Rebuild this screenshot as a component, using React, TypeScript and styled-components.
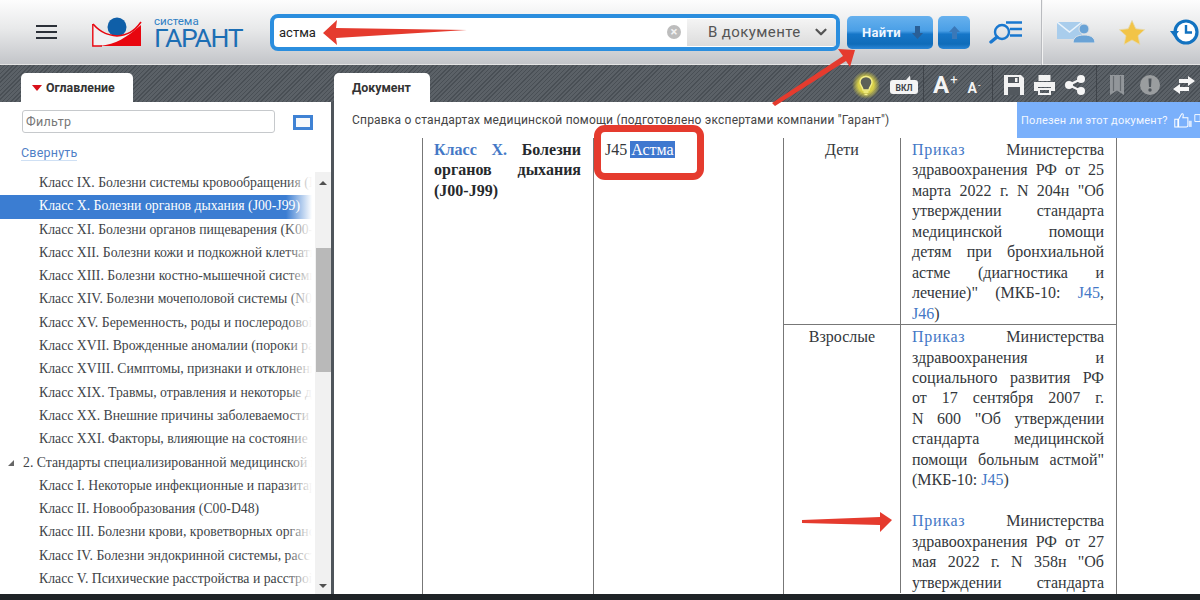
import React from 'react';
import styled, { createGlobalStyle } from 'styled-components';
import { ChevronDown } from 'lucide-react';

const GlobalStyle = createGlobalStyle`
  html, body { margin: 0; padding: 0; background: #1f2327; }
  * { box-sizing: border-box; }
`;

const Page = styled.div`
  position: relative;
  width: 1200px;
  height: 600px;
  overflow: hidden;
  display: flex;
  flex-direction: column;
  font-family: Roboto, "Liberation Sans", sans-serif;
  background: #1f2327;
`;

const Header = styled.header`
  height: 65px;
  flex: none;
  display: flex;
  align-items: center;
  background: linear-gradient(#fdfdfd 0%, #e8e9ea 45%, #c3c5c9 100%);
  border-bottom: 1px solid #e4e4e4;
`;

const Burger = styled.div`
  width: 21px;
  height: 14px;
  margin-left: 36px;
  border-top: 2px solid #2b3038;
  border-bottom: 2px solid #2b3038;
  position: relative;
  &::after {
    content: '';
    position: absolute;
    left: 0;
    right: 0;
    top: 4px;
    height: 2px;
    background: #2b3038;
  }
`;

const Brand = styled.div`
  display: flex;
  align-items: center;
  margin-left: 35px;
  width: 178px;
  height: 40px;
`;

const BrandText = styled.div`
  margin-left: 11px;
  padding-top: 4px;
  color: #1c6eb4;
  display: flex;
  flex-direction: column;
`;

const BrandSmall = styled.span`
  font-size: 11.5px;
  line-height: 6px;
  color: #2f7fc4;
`;

const BrandBig = styled.span`
  font-size: 26.5px;
  line-height: 27px;
  font-weight: 400;
  letter-spacing: -1.3px;
`;

const SearchBox = styled.div`
  width: 570px;
  height: 37px;
  display: flex;
  align-items: stretch;
  border: 4px solid #2b8ede;
  border-radius: 8px;
  background: #fff;
  overflow: hidden;
`;

const SearchText = styled.div`
  flex: 1;
  padding-left: 5px;
  display: flex;
  align-items: center;
  justify-content: space-between;
  font-size: 13px;
  color: #222;
`;

const ClearIcon = styled.span`
  width: 14px;
  height: 14px;
  margin-right: 6px;
  border-radius: 50%;
  background: #bdbdbd;
  color: #f2f2f2;
  font-size: 13px;
  line-height: 13px;
  text-align: center;
  font-weight: 700;
`;

const ScopeSelect = styled.div`
  width: 149px;
  margin: 1px 0;
  display: flex;
  align-items: center;
  justify-content: space-between;
  padding: 0 6px 0 21px;
  background: linear-gradient(#f4f4f4, #dcdcdc);
  color: #555;
  font-size: 15px;
  letter-spacing: 0.4px;
`;

const FindButton = styled.button<{ $wide?: boolean }>`
  width: ${(p) => (p.$wide ? '86px' : '32px')};
  height: 33px;
  margin-left: ${(p) => (p.$wide ? '7px' : '5px')};
  border: 0;
  padding: 0 0 0 ${(p) => (p.$wide ? '15px' : '0')};
  border-radius: 5px;
  display: flex;
  align-items: center;
  justify-content: ${(p) => (p.$wide ? 'flex-start' : 'center')};
  gap: 11px;
  background: linear-gradient(#67b1ee 0%, #4a9fe6 45%, #1676c8 55%, #0f6cb9 85%, #2a86d6 100%);
  color: #eef6ff;
  font-family: inherit;
  font-size: 13px;
  font-weight: 700;
  letter-spacing: 0.3px;
`;

const HeaderIcon = styled.div<{ $left: number }>`
  margin-left: ${(p) => p.$left}px;
  display: flex;
  flex: none;
`;

const HeaderDivider = styled.div`
  width: 2px;
  height: 65px;
  margin-left: 18px;
  background: #b9bbbf;
  border-right: 1px solid #f2f2f2;
`;

const Strip = styled.div`
  height: 37px;
  flex: none;
  display: flex;
  align-items: flex-end;
  background: repeating-linear-gradient(135deg, #494f55 0 1px, #5b6167 1px 3px);
`;

const TabSlot = styled.div<{ $width: number }>`
  width: ${(p) => p.$width}px;
  flex: none;
  padding-left: ${(p) => (p.$width > 500 ? 0 : 21)}px;
`;

const Tab = styled.div<{ $width: number }>`
  width: ${(p) => p.$width}px;
  height: 29px;
  background: #fff;
  border-radius: 5px 5px 0 0;
  display: flex;
  align-items: center;
  gap: 4px;
  padding-left: ${(p) => (p.$width > 100 ? 11 : 18)}px;
  color: #333;
  font-size: 12.4px;
  font-weight: 700;
`;

const Caret = styled.span`
  width: 0;
  height: 0;
  border-left: 5px solid transparent;
  border-right: 5px solid transparent;
  border-top: 6px solid #d8101a;
`;

const Tools = styled.div`
  flex: 1;
  height: 37px;
  display: flex;
  align-items: center;
`;

const ToolDivider = styled.div<{ $left: number }>`
  width: 1px;
  height: 37px;
  margin-left: ${(p) => p.$left}px;
  background: #3f444a;
`;

const ToolIcon = styled.div<{ $left: number }>`
  margin-left: ${(p) => p.$left}px;
  margin-top: 3px;
  display: flex;
  flex: none;
`;

const FontSizeMark = styled.span<{ $big?: boolean; $left: number }>`
  margin-left: ${(p) => p.$left}px;
  font-size: ${(p) => (p.$big ? 24 : 14)}px;
  line-height: 1;
  font-weight: 700;
  color: #f4f4f4;
  display: flex;
  align-items: flex-start;
  margin-top: ${(p) => (p.$big ? 3 : 9)}px;
  & > sup {
    font-size: ${(p) => (p.$big ? 13 : 9)}px;
    font-weight: 400;
    line-height: 1;
    margin-left: 1px;
  }
`;

const Main = styled.main`
  flex: 1;
  min-height: 0;
  overflow: hidden;
  display: flex;
  background: #4f555b;
`;

const Footer = styled.footer`
  height: 6px;
  flex: none;
  background: #1f2327;
`;

const Sidebar = styled.aside`
  width: 331px;
  flex: none;
  background: #fff;
  display: flex;
  flex-direction: column;
`;

const FilterRow = styled.div`
  height: 39px;
  flex: none;
  padding: 8px 0 0 22px;
  display: flex;
  align-items: flex-start;
`;

const FilterInput = styled.div`
  width: 253px;
  height: 23px;
  border: 1px solid #c6c9cc;
  border-radius: 3px;
  padding-left: 3px;
  font-size: 12.5px;
  line-height: 21px;
  letter-spacing: 0.3px;
  color: #777;
`;

const ViewToggle = styled.div`
  width: 20px;
  height: 15px;
  margin: 5px 0 0 18px;
  border: 3px solid #3f82d4;
  background: #f6f8fb;
`;

const CollapseRow = styled.div`
  height: 31px;
  flex: none;
  padding: 1px 0 0 21px;
`;

const CollapseLink = styled.span`
  font-size: 12.5px;
  line-height: 15px;
  letter-spacing: 0.2px;
  color: #4f80c6;
  border-bottom: 1px solid #cfe0f4;
  display: inline-block;
`;

const TreeArea = styled.div`
  flex: 1;
  min-height: 0;
  display: flex;
`;

const TreeList = styled.div`
  position: relative;
  width: 312px;
  flex: none;
  overflow: hidden;
  &::after {
    content: '';
    position: absolute;
    top: 0;
    bottom: 0;
    right: 0;
    width: 26px;
    background: linear-gradient(to right, rgba(255, 255, 255, 0), #fff);
  }
`;

const TreeRow = styled.div<{ $active?: boolean; $level?: number }>`
  height: 23.3px;
  line-height: 22px;
  padding-left: ${(p) => (p.$level === 1 ? 23 : 39)}px;
  white-space: nowrap;
  font-family: "Liberation Serif", serif;
  font-size: 13.75px;
  color: ${(p) => (p.$active ? '#fff' : '#404448')};
  background: ${(p) => (p.$active ? '#3b7dd2' : 'transparent')};
  position: relative;
`;

const Expander = styled.span`
  position: absolute;
  left: 8px;
  top: 8px;
  width: 0;
  height: 0;
  border-left: 6px solid transparent;
  border-bottom: 6px solid #666;
`;

const Scrollbar = styled.div`
  width: 16px;
  margin-left: 3px;
  padding-bottom: 6px;
  flex: none;
  background: #f1f1f1;
  display: flex;
  flex-direction: column;
  align-items: center;
`;

const ScrollArrow = styled.span<{ $down?: boolean }>`
  width: 0;
  height: 0;
  margin-top: ${(p) => (p.$down ? '6px' : '9px')};
  border-left: 4px solid transparent;
  border-right: 4px solid transparent;
  border-bottom: ${(p) => (p.$down ? '0' : '4px solid #505050')};
  border-top: ${(p) => (p.$down ? '4px solid #505050' : '0')};
`;

const ScrollThumb = styled.div`
  width: 15px;
  height: 124px;
  margin-top: 63px;
  background: #b9b9b9;
`;

const ScrollGap = styled.div`
  flex: 1;
`;

const Document = styled.section`
  margin-left: 3px;
  flex: 1;
  min-width: 0;
  background: #fff;
  display: flex;
  flex-direction: column;
`;

const DocHeader = styled.div`
  height: 36px;
  flex: none;
  display: flex;
  justify-content: space-between;
  align-items: center;
  padding-left: 18px;
`;

const DocTitle = styled.div`
  font-size: 12px;
  letter-spacing: 0.2px;
  color: #444;
`;

const Feedback = styled.div`
  width: 183px;
  height: 36px;
  flex: none;
  background: #7ab0fb;
  color: #f2f7ff;
  font-size: 11px;
  letter-spacing: 0.2px;
  display: flex;
  align-items: center;
  gap: 6px;
  padding-left: 4px;
  white-space: nowrap;
  overflow: hidden;
`;

const DocBody = styled.div`
  flex: 1;
  min-height: 0;
  overflow: hidden;
  padding-left: 88px;
`;

const TableGrid = styled.div`
  width: 695px;
  display: grid;
  grid-template-columns: 170px 190px 1fr;
  font-family: "Liberation Serif", serif;
  font-size: 16px;
  line-height: 20.45px;
  color: #33373b;
  border-left: 1px solid #777;
  border-right: 1px solid #777;
  height: 900px;
`;

const ClassCell = styled.div`
  padding: 2px 12px 0 11px;
  font-weight: 700;
  color: #26292c;
`;

const CodeCell = styled.div`
  border-left: 1px solid #777;
  padding: 2px 0 0 11px;
`;

const Highlight = styled.span`
  background: #3f78cf;
  color: #fff;
  padding: 0 1px;
  margin-left: 3px;
`;

const AgeRows = styled.div`
  border-left: 1px solid #777;
`;

const AgeRow = styled.div`
  display: grid;
  grid-template-columns: 116px 1fr;
  & + & {
    border-top: 1px solid #777;
  }
`;

const AgeCell = styled.div`
  text-align: center;
  padding-top: 2px;
`;

const OrderCell = styled.div`
  border-left: 1px solid #777;
  padding: 2px 12px 0 11px;
`;

const Line = styled.div<{ $last?: boolean }>`
  text-align: justify;
  text-align-last: ${(p) => (p.$last ? 'left' : 'justify')};
`;

const Blank = styled.div`
  height: 20.5px;
`;

const DocLink = styled.span`
  color: #4478c6;
`;

const OrderLink = styled(DocLink)`
  letter-spacing: 0.7px;
`;

const AnnotationLayer = styled.svg`
  position: absolute;
  left: 0;
  top: 0;
  pointer-events: none;
`;

const CalloutBox = styled.div`
  position: absolute;
  left: 594px;
  top: 125px;
  width: 110px;
  height: 55px;
  border: 7px solid #e53b2e;
  border-radius: 11px;
  pointer-events: none;
`;

const treeRows = [
  { text: 'Класс IX. Болезни системы кровообращения (I00-I99)' },
  { text: 'Класс X. Болезни органов дыхания (J00-J99)', active: true },
  { text: 'Класс XI. Болезни органов пищеварения (K00-K93)' },
  { text: 'Класс XII. Болезни кожи и подкожной клетчатки (L00-L99)' },
  { text: 'Класс XIII. Болезни костно-мышечной системы (M00-M99)' },
  { text: 'Класс XIV. Болезни мочеполовой системы (N00-N99)' },
  { text: 'Класс XV. Беременность, роды и послеродовой период' },
  { text: 'Класс XVII. Врожденные аномалии (пороки развития)' },
  { text: 'Класс XVIII. Симптомы, признаки и отклонения от нормы' },
  { text: 'Класс XIX. Травмы, отравления и некоторые другие' },
  { text: 'Класс XX. Внешние причины заболеваемости и смертности' },
  { text: 'Класс XXI. Факторы, влияющие на состояние здоровья' },
  { text: '2. Стандарты специализированной медицинской помощи', level: 1 },
  { text: 'Класс I. Некоторые инфекционные и паразитарные болезни' },
  { text: 'Класс II. Новообразования (C00-D48)' },
  { text: 'Класс III. Болезни крови, кроветворных органов' },
  { text: 'Класс IV. Болезни эндокринной системы, расстройства' },
  { text: 'Класс V. Психические расстройства и расстройства поведения' },
];

const Logo = () => (
  <svg width="51" height="32" viewBox="0 0 51 32">
    <circle cx="25" cy="11" r="9.5" fill="#0f5fa8" />
    <path d="M0 8 C10 18 17 19 25 20 C35 19 42 16 49 6 V30 H0 Z" fill="#f1f1f3" />
    <path d="M8 30 C24 28 34 22 49 9 V30 Z" fill="#e8060f" />
    <path d="M1 8 C10 18 17 19 25 20 C35 19 42 16 49 6" fill="none" stroke="#e8060f" strokeWidth="1.6" />
    <path d="M0.8 8 V30 H10" fill="none" stroke="#e8060f" strokeWidth="1.4" />
  </svg>
);

const ArrowGlyph = ({ up, color }: { up?: boolean; color: string }) => (
  <svg width="11" height="13" viewBox="0 0 11 13">
    <path d={up ? 'M5.5 0 L11 6 H8 V13 H3 V6 H0 Z' : 'M3 0 H8 V7 H11 L5.5 13 L0 7 H3 Z'} fill={color} />
  </svg>
);

const SearchListIcon = () => (
  <svg width="34" height="24" viewBox="0 0 34 24">
    <circle cx="13" cy="12" r="7" fill="none" stroke="#1a78cf" strokeWidth="2.4" />
    <path d="M8 17 L2 22" stroke="#1a78cf" strokeWidth="3.4" strokeLinecap="round" />
    <path d="M17 2.5 H33 M21 9 H33 M21 15.5 H33" stroke="#1a78cf" strokeWidth="2.6" />
  </svg>
);

const MailPersonIcon = () => (
  <svg width="38" height="22" viewBox="0 0 38 22">
    <path d="M0 1 H25 V18 H0 Z" fill="#a9cdec" />
    <path d="M0 1 L12.5 11 L25 1" fill="none" stroke="#eaf3fb" strokeWidth="1.6" />
    <circle cx="27" cy="8" r="5" fill="#6aa3d6" stroke="#dfe3e7" />
    <path d="M16 22 C16 16 21 14 27 14 C33 14 38 16 38 22 Z" fill="#6aa3d6" stroke="#dfe3e7" />
  </svg>
);

const StarIcon = () => (
  <svg width="26" height="25" viewBox="0 0 26 25">
    <path d="M13 0.5 L16.8 8.8 L25.6 9.7 L19 15.7 L20.9 24.5 L13 20 L5.1 24.5 L7 15.7 L0.4 9.7 L9.2 8.8 Z" fill="#f2c447" stroke="#e6d8a8" strokeWidth="0.8" />
  </svg>
);

const HistoryIcon = () => (
  <svg width="30" height="28" viewBox="0 0 30 28">
    <circle cx="16" cy="14" r="11" fill="#fff" stroke="#1272c0" strokeWidth="3.2" />
    <path d="M16 7 V14.5 H22" fill="none" stroke="#1272c0" strokeWidth="2.4" />
    <path d="M0 13 H9 L4.5 19 Z" fill="#1272c0" />
  </svg>
);

const BulbIcon = () => (
  <svg width="28" height="28" viewBox="0 0 28 28">
    <defs>
      <radialGradient id="bulbGlow">
        <stop offset="55%" stopColor="#e6dc45" stopOpacity="0.9" />
        <stop offset="100%" stopColor="#e6dc45" stopOpacity="0" />
      </radialGradient>
    </defs>
    <circle cx="14" cy="14" r="14" fill="url(#bulbGlow)" />
    <path d="M14 5.5 C10 5.5 8 8.5 8 11.2 C8 14.5 10.8 15.5 11 19 H17 C17.2 15.5 20 14.5 20 11.2 C20 8.5 18 5.5 14 5.5 Z" fill="#5c6058" stroke="#f5ef8a" strokeWidth="1.4" />
    <path d="M11.5 21 H16.5 M12.5 23.5 H15.5" stroke="#f5ef8a" strokeWidth="1.5" />
  </svg>
);

const OnBadge = () => (
  <svg width="28" height="20" viewBox="0 0 28 20">
    <path d="M3 5 H16 L20 0.5 L20.5 5 H25 Q28 5 28 8 V16 Q28 19 25 19 H3 Q0 19 0 16 V8 Q0 5 3 5 Z" fill="#f4f4f4" />
    <text x="14" y="16" fontSize="8.5" fontWeight="700" textAnchor="middle" fill="#3f444a" fontFamily="Roboto, sans-serif">ВКЛ</text>
  </svg>
);

const SaveIcon = () => (
  <svg width="20" height="20" viewBox="0 0 20 20">
    <path d="M0 0 H17 L20 3 V20 H0 Z" fill="#f2f2f2" />
    <path d="M4 2 H15 V8 H4 Z M4 12 H16 V20 H4 Z" fill="#52585e" />
    <path d="M11 3 H13.5 V7 H11 Z" fill="#f2f2f2" />
  </svg>
);

const PrintIcon = () => (
  <svg width="21" height="20" viewBox="0 0 21 20">
    <path d="M4.5 0 H16.5 V6 H4.5 Z" fill="#f2f2f2" />
    <path d="M0 7 H21 V16 H17 V12 H4 V16 H0 Z" fill="#f2f2f2" />
    <path d="M4 13 H17 V20 H4 Z M6 15 V18 H15 V15 Z" fill="#f2f2f2" fillRule="evenodd" />
  </svg>
);

const ShareIcon = () => (
  <svg width="20" height="20" viewBox="0 0 20 20">
    <path d="M16 4 L4 10 L16 16" fill="none" stroke="#f6f6f6" strokeWidth="2.2" />
    <circle cx="16" cy="4" r="4" fill="#f6f6f6" />
    <circle cx="4" cy="10" r="4" fill="#f6f6f6" />
    <circle cx="16" cy="16" r="4" fill="#f6f6f6" />
  </svg>
);

const BookmarkIcon = () => (
  <svg width="14" height="20" viewBox="0 0 14 20">
    <path d="M0 0 H14 V20 L7 15.5 L0 20 Z" fill="#92969a" />
    <path d="M3.5 1 V16 M10.5 1 V16" stroke="#666b70" strokeWidth="1.2" />
  </svg>
);

const AlertIcon = () => (
  <svg width="20" height="20" viewBox="0 0 20 20">
    <circle cx="10" cy="10" r="10" fill="#9a9d9f" />
    <path d="M8.5 3.5 H11.5 L11 12 H9 Z" fill="#4f555b" />
    <circle cx="10" cy="15" r="1.7" fill="#4f555b" />
  </svg>
);

const SwapIcon = () => (
  <svg width="22" height="18" viewBox="0 0 22 18">
    <path d="M22 5 L15 0 V3 H6 V7 H15 V10 Z" fill="#f6f6f6" />
    <path d="M0 13 L7 8 V11 H16 V15 H7 V18 Z" fill="#f6f6f6" />
  </svg>
);

const ThumbIcon = () => (
  <svg width="34" height="20" viewBox="0 0 34 20">
    <path d="M1 9 H5 V19 H1 Z M6 9 L10 2 Q12 1 12 4 L11.5 7 H18 V17 Q18 19 16 19 H6 Z" fill="none" stroke="#fff" strokeWidth="1.3" />
    <path d="M19 11 H23 V19 H19 Z" fill="#dbe9ff" />
    <path d="M27 3 H34 V12 H27 Z" fill="none" stroke="#fff" strokeWidth="1.2" />
  </svg>
);

const Annotations = () => (
  <AnnotationLayer width="1200" height="600" viewBox="0 0 1200 600">
    <path d="M323 33 L337 20 L336 28 L467 30 L336 38 L337 45 Z" fill="#e53b2e" />
    <path d="M772 103 L843 56 L838 49 L855 50 L850 67 L846 61 L775 106 Z" fill="#e53b2e" />
    <path d="M802 520 L880 517 L880 512 L892 520 L880 532 L880 525 L802 523 Z" fill="#e53b2e" />
  </AnnotationLayer>
);

const App: React.FC = () => {
  return (
    <Page>
      <GlobalStyle />
      <Header>
        <Burger />
        <Brand>
          <Logo />
          <BrandText>
            <BrandSmall>система</BrandSmall>
            <BrandBig>ГАРАНТ</BrandBig>
          </BrandText>
        </Brand>
        <SearchBox>
          <SearchText>
            астма
            <ClearIcon>×</ClearIcon>
          </SearchText>
          <ScopeSelect>
            В документе
            <ChevronDown size={18} strokeWidth={3} color="#555" />
          </ScopeSelect>
        </SearchBox>
        <FindButton $wide>
          Найти
          <ArrowGlyph color="#2a5f96" />
        </FindButton>
        <FindButton>
          <ArrowGlyph up color="#3a78b8" />
        </FindButton>
        <HeaderIcon $left={19}>
          <SearchListIcon />
        </HeaderIcon>
        <HeaderDivider />
        <HeaderIcon $left={14}>
          <MailPersonIcon />
        </HeaderIcon>
        <HeaderIcon $left={24}>
          <StarIcon />
        </HeaderIcon>
        <HeaderIcon $left={25}>
          <HistoryIcon />
        </HeaderIcon>
      </Header>

      <Strip>
        <TabSlot $width={334}>
          <Tab $width={112}>
            <Caret />
            Оглавление
          </Tab>
        </TabSlot>
        <TabSlot $width={518}>
          <Tab $width={96}>Документ</Tab>
        </TabSlot>
        <Tools>
          <ToolIcon $left={0}>
            <BulbIcon />
          </ToolIcon>
          <ToolIcon $left={10}>
            <OnBadge />
          </ToolIcon>
          <ToolDivider $left={5} />
          <FontSizeMark $big $left={9}>
            A<sup>+</sup>
          </FontSizeMark>
          <FontSizeMark $left={10}>
            A<sup>-</sup>
          </FontSizeMark>
          <ToolDivider $left={12} />
          <ToolIcon $left={11}>
            <SaveIcon />
          </ToolIcon>
          <ToolIcon $left={10}>
            <PrintIcon />
          </ToolIcon>
          <ToolIcon $left={10}>
            <ShareIcon />
          </ToolIcon>
          <ToolDivider $left={11} />
          <ToolIcon $left={13}>
            <BookmarkIcon />
          </ToolIcon>
          <ToolIcon $left={16}>
            <AlertIcon />
          </ToolIcon>
          <ToolIcon $left={13}>
            <SwapIcon />
          </ToolIcon>
        </Tools>
      </Strip>

      <Main>
        <Sidebar>
          <FilterRow>
            <FilterInput>Фильтр</FilterInput>
            <ViewToggle />
          </FilterRow>
          <CollapseRow>
            <CollapseLink>Свернуть</CollapseLink>
          </CollapseRow>
          <TreeArea>
            <TreeList>
              {treeRows.map((row) => (
                <TreeRow key={row.text} $active={row.active} $level={row.level}>
                  {row.level === 1 && <Expander />}
                  {row.text}
                </TreeRow>
              ))}
            </TreeList>
            <Scrollbar>
              <ScrollArrow />
              <ScrollThumb />
              <ScrollGap />
              <ScrollArrow $down />
            </Scrollbar>
          </TreeArea>
        </Sidebar>

        <Document>
          <DocHeader>
            <DocTitle>Справка о стандартах медицинской помощи (подготовлено экспертами компании "Гарант")</DocTitle>
            <Feedback>
              Полезен ли этот документ?
              <ThumbIcon />
            </Feedback>
          </DocHeader>
          <DocBody>
            <TableGrid>
              <ClassCell>
                <Line>
                  <DocLink>Класс X.</DocLink> Болезни
                </Line>
                <Line>органов дыхания</Line>
                <Line $last>(J00-J99)</Line>
              </ClassCell>
              <CodeCell>
                J45
                <Highlight>Астма</Highlight>
              </CodeCell>
              <AgeRows>
                <AgeRow>
                  <AgeCell>Дети</AgeCell>
                  <OrderCell>
                    <Line>
                      <OrderLink>Приказ</OrderLink> Министерства
                    </Line>
                    <Line>здравоохранения РФ от 25</Line>
                    <Line>марта 2022 г. N 204н "Об</Line>
                    <Line>утверждении стандарта</Line>
                    <Line>медицинской помощи</Line>
                    <Line>детям при бронхиальной</Line>
                    <Line>астме (диагностика и</Line>
                    <Line>
                      лечение)" (МКБ-10: <DocLink>J45</DocLink>,
                    </Line>
                    <Line $last>
                      <DocLink>J46</DocLink>)
                    </Line>
                  </OrderCell>
                </AgeRow>
                <AgeRow>
                  <AgeCell>Взрослые</AgeCell>
                  <OrderCell>
                    <Line>
                      <OrderLink>Приказ</OrderLink> Министерства
                    </Line>
                    <Line>здравоохранения и</Line>
                    <Line>социального развития РФ</Line>
                    <Line>от 17 сентября 2007 г.</Line>
                    <Line>N 600 "Об утверждении</Line>
                    <Line>стандарта медицинской</Line>
                    <Line>помощи больным астмой"</Line>
                    <Line $last>
                      (МКБ-10: <DocLink>J45</DocLink>)
                    </Line>
                    <Blank />
                    <Line>
                      <OrderLink>Приказ</OrderLink> Министерства
                    </Line>
                    <Line>здравоохранения РФ от 27</Line>
                    <Line>мая 2022 г. N 358н "Об</Line>
                    <Line>утверждении стандарта</Line>
                  </OrderCell>
                </AgeRow>
              </AgeRows>
            </TableGrid>
          </DocBody>
        </Document>
      </Main>
      <Footer />
      <CalloutBox />
      <Annotations />
    </Page>
  );
};

export default App;
